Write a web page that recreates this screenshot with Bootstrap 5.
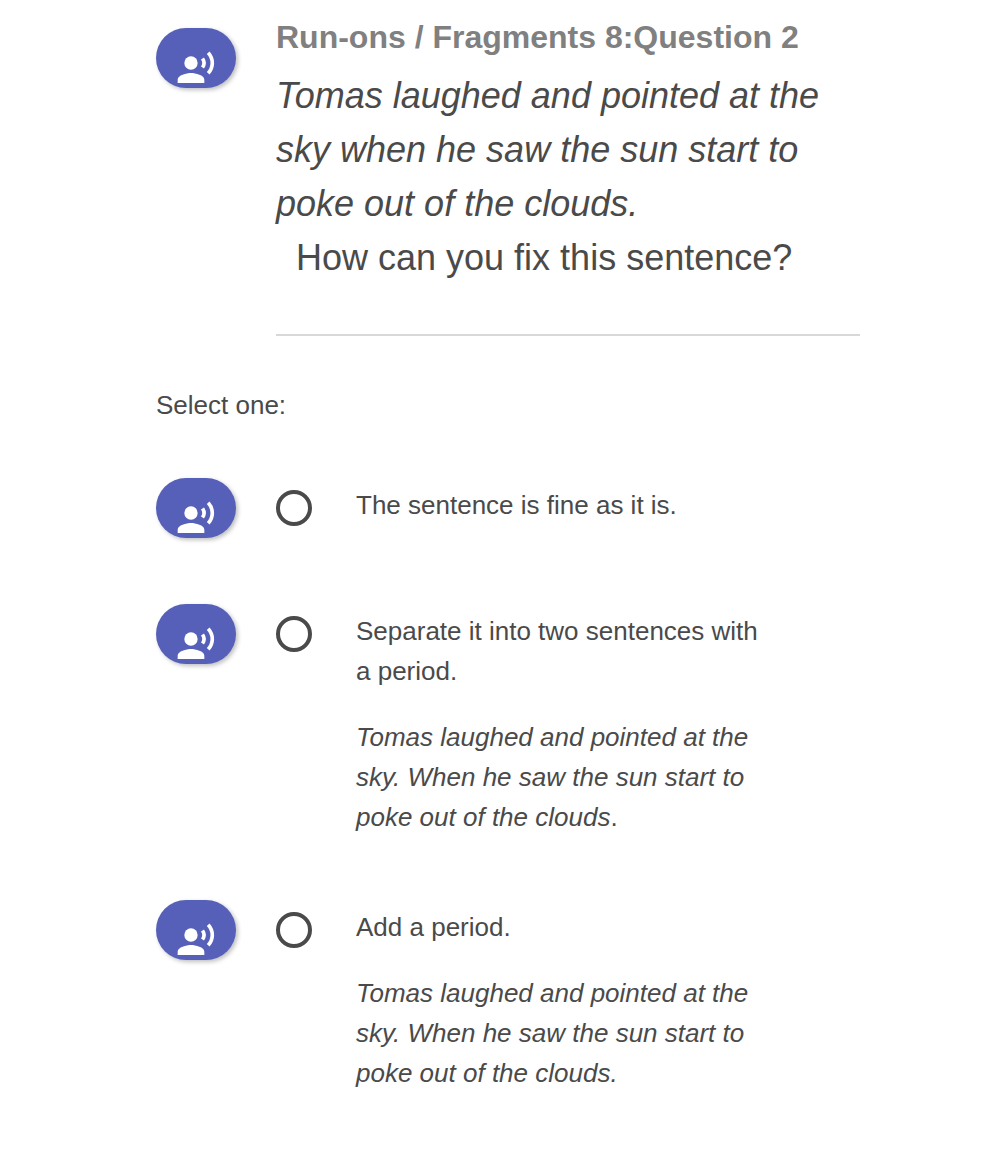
<!DOCTYPE html>
<html lang="en">
<head>
<meta charset="utf-8">
<meta name="viewport" content="width=device-width, initial-scale=1">
<title>Run-ons / Fragments 8: Question 2</title>
<link href="https://cdn.jsdelivr.net/npm/bootstrap@5.3.0/dist/css/bootstrap.min.css" rel="stylesheet">
<style>
  body { font-family: "Liberation Sans", Arial, sans-serif; color: #4a4a4a; background: #fff; }
  .quiz { max-width: 704px; }
  .quiz-row { gap: 40px; }
  .speak-btn { width: 80px; height: 60px; padding: 20px 20px 0; border: 0; border-radius: 30px; background: #5660b9; color: #fff; box-shadow: 2px 2px 4px rgba(0, 0, 0, .25); overflow: hidden; }
  .speak-btn:hover, .speak-btn:active { background: #4650a8 !important; color: #fff; }
  .speak-btn svg { display: block; width: 40px; height: 40px; fill: currentColor; }
  .quiz-title { font-size: 32px; line-height: 48px; font-weight: 700; color: #808080; }
  .question { font-size: 36px; line-height: 54px; margin-top: 8px; }
  .question-head { padding-top: 13px; }
  .question-head .speak-btn { margin-top: 15px; }
  .divider { margin: 49px 0 0; border-top: 2px solid #d8d8d8; opacity: 1; }
  .select-one { font-size: 26px; line-height: 40px; margin: 49px 0 53px; }
  .options { gap: 63px; }
  .option { min-height: 63px; }
  .option .form-check-input { width: 36px; height: 36px; margin: 12px 4px 0 0; border: 4px solid #4a4a4a; }
  .option-text { font-size: 26px; line-height: 40px; padding: 7px 88px 0 0; }
  .option-text p + p { margin-top: 26px; }
</style>
</head>
<body>
<svg class="d-none" aria-hidden="true">
  <symbol id="voice" viewBox="0 0 24 24">
    <circle cx="9" cy="9" r="4"/>
    <path d="M9 15c-2.670 0-8 1.340-8 4v2h16v-2c0-2.660-5.330-4-8-4z"/>
    <path d="M15.900 6.300c1.200 1.700 1.200 3.700 0 5.400M19.300 2.800c3.300 3.600 3.300 8.800 0 12.400" fill="none" stroke="currentColor" stroke-width="2.2"/>
  </symbol>
</svg>
<div class="ps-4">
<main class="quiz mx-auto pb-5">
  <section class="question-head quiz-row d-flex align-items-start">
    <button type="button" class="btn speak-btn flex-shrink-0" aria-label="Read question aloud"><svg><use href="#voice"/></svg></button>
    <div class="flex-grow-1">
      <h1 class="quiz-title mb-0">Run-ons / Fragments 8:Question 2</h1>
      <p class="question mb-0"><em>Tomas laughed and pointed at the sky when he saw the sun start to poke out of the clouds.</em><br>&nbsp; How can you fix this sentence?</p>
      <hr class="divider">
    </div>
  </section>
  <fieldset>
    <legend class="select-one">Select one:</legend>
    <div class="options d-flex flex-column">
      <div class="option quiz-row d-flex align-items-start">
        <button type="button" class="btn speak-btn flex-shrink-0" aria-label="Read first answer aloud"><svg><use href="#voice"/></svg></button>
        <input class="form-check-input flex-shrink-0" type="radio" name="answer" id="answer1">
        <label class="option-text flex-grow-1" for="answer1">The sentence is fine as it is.</label>
      </div>
      <div class="option quiz-row d-flex align-items-start">
        <button type="button" class="btn speak-btn flex-shrink-0" aria-label="Read second answer aloud"><svg><use href="#voice"/></svg></button>
        <input class="form-check-input flex-shrink-0" type="radio" name="answer" id="answer2">
        <label class="option-text flex-grow-1" for="answer2"><p class="mb-0">Separate it into two sentences with a period.</p><p class="mb-0"><em>Tomas laughed and pointed at the sky. When he saw the sun start to poke out of the clouds</em>.</p></label>
      </div>
      <div class="option quiz-row d-flex align-items-start">
        <button type="button" class="btn speak-btn flex-shrink-0" aria-label="Read third answer aloud"><svg><use href="#voice"/></svg></button>
        <input class="form-check-input flex-shrink-0" type="radio" name="answer" id="answer3">
        <label class="option-text flex-grow-1" for="answer3"><p class="mb-0">Add a period.</p><p class="mb-0"><em>Tomas laughed and pointed at the sky. When he saw the sun start to poke out of the clouds.</em></p></label>
      </div>
    </div>
  </fieldset>
</main>
</div>
<script src="https://cdn.jsdelivr.net/npm/bootstrap@5.3.0/dist/js/bootstrap.bundle.min.js"></script>
</body>
</html>
